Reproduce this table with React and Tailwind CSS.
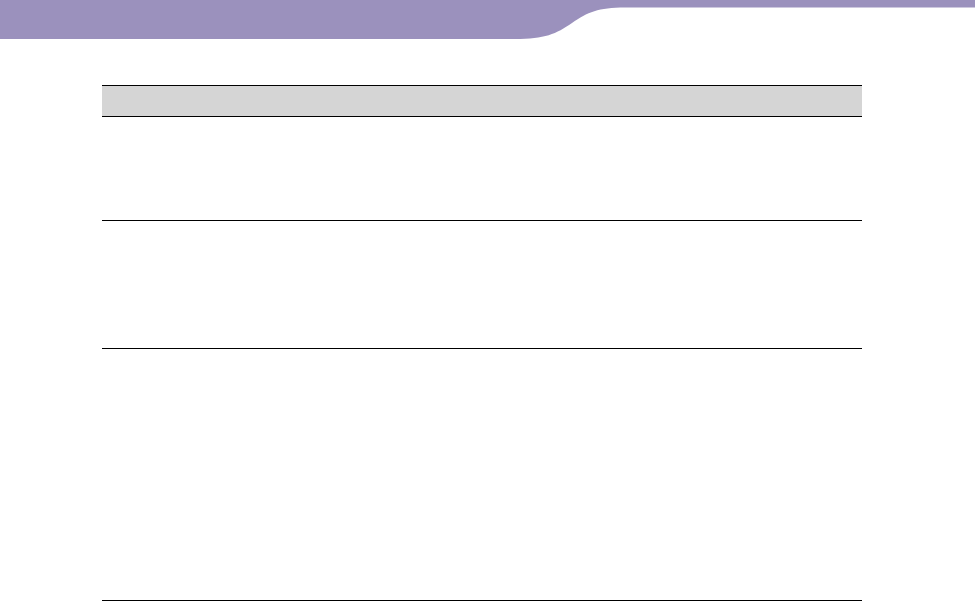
export default function App() {
  return (
    <div className="w-[975px] h-[601px] bg-white overflow-hidden relative">
      <svg width="975" height="40" viewBox="0 0 975 40" className="block">
        <path
          d="M0 0 H975 V7.5 H625 C598 7.5 588 12 572 23 C556 34 545 39 515 39 H0 Z"
          fill="#9b91bd"
        />
      </svg>
      <div className="ml-[102px] mt-[45px] w-[760px] border-t border-black">
        <div className="h-[31px] bg-[#d5d5d5] border-b border-black"></div>
        <div className="h-[104px] border-b border-black"></div>
        <div className="h-[128px] border-b border-black"></div>
        <div className="h-[252px] border-b border-black"></div>
      </div>
    </div>
  );
}
